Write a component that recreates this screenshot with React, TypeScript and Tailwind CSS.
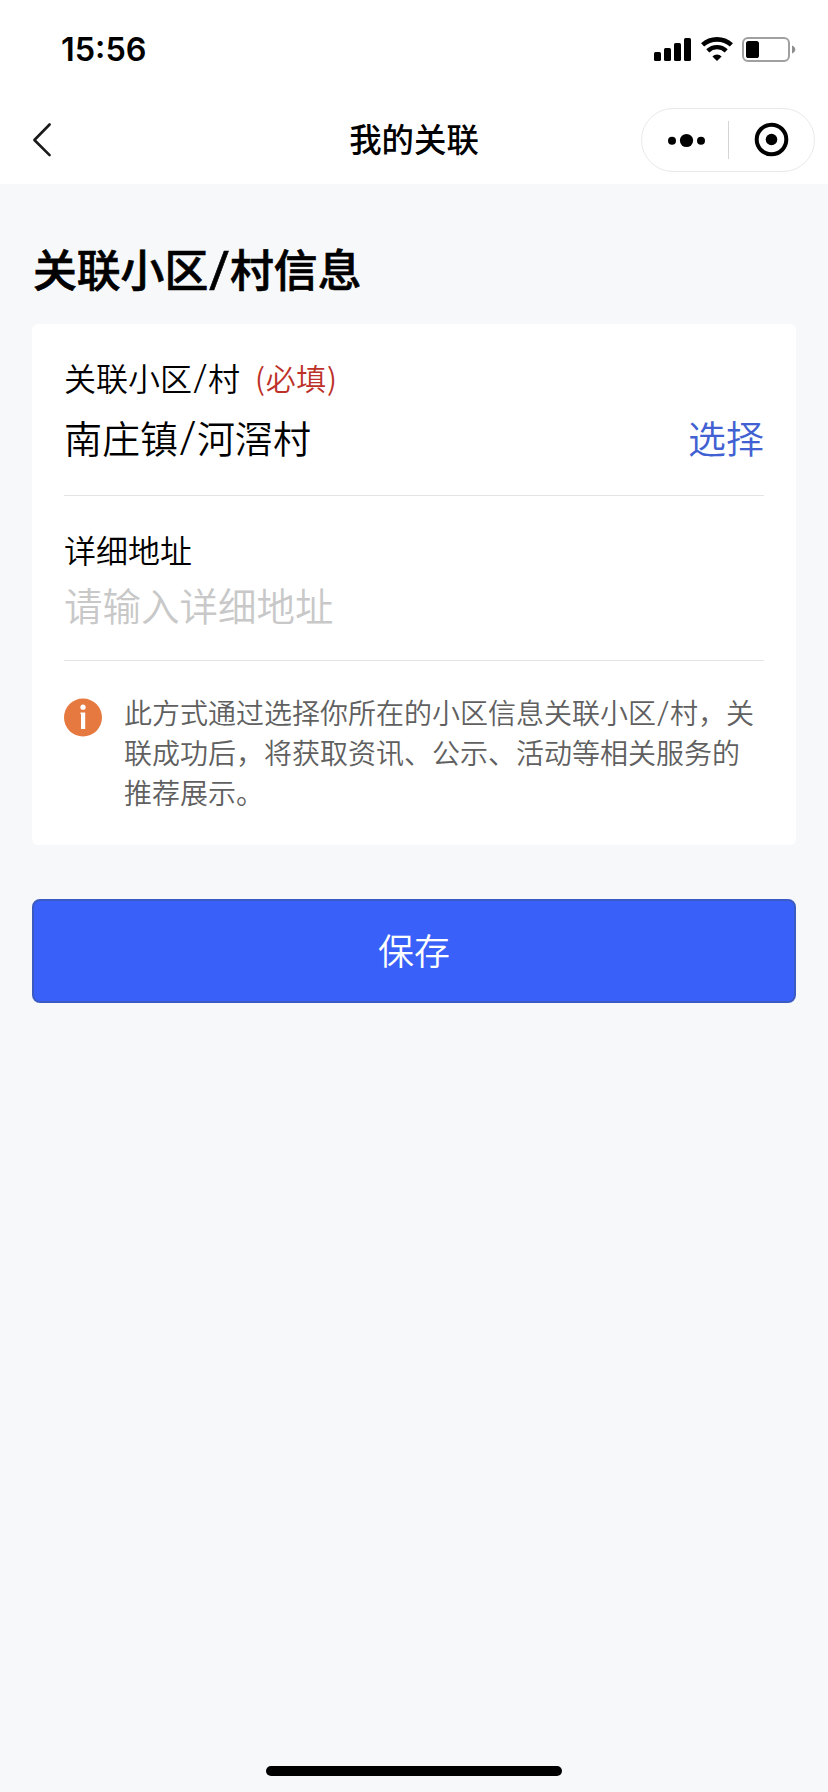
import React from "react";

function StatusBar() {
  return (
    <div className="flex h-[98px] items-start justify-between pl-[61px] pr-[32px]">
      <span className="pt-[30px] font-['Inter',sans-serif] text-[32.4px] leading-[40px] font-semibold">
        15:56
      </span>
      <div className="flex gap-[9px] pt-[36px]">
        <svg width="38" height="27" viewBox="0 0 38 27" fill="#000">
          <rect x="0" y="16" width="7" height="9" rx="1.6" />
          <rect x="10" y="12" width="7" height="13" rx="1.6" />
          <rect x="20" y="7" width="7" height="18" rx="1.6" />
          <rect x="30" y="2" width="7" height="23" rx="1.6" />
        </svg>
        <svg width="32" height="27" viewBox="0 0 32 27" fill="none" stroke="#000">
          <path d="M1.6 8.9A21.4 21.4 0 0 1 30.4 8.9" strokeWidth="4.6" />
          <path d="M6.8 14.8A13.4 13.4 0 0 1 25.2 14.8" strokeWidth="4.4" />
          <path d="M11.4 20.4A6.6 6.6 0 0 1 20.6 20.4L16 25Z" fill="#000" stroke="none" />
        </svg>
        <svg width="54" height="27" viewBox="0 0 54 27" fill="none">
          <rect x="1" y="2" width="46" height="23" rx="5" stroke="#a0a0a0" strokeWidth="2" />
          <rect x="4" y="5" width="13" height="17" rx="2.6" fill="#000" />
          <path d="M50 9.5C54.4 11 54.4 16 50 17.5Z" fill="#8e8e8e" />
        </svg>
      </div>
    </div>
  );
}

function NavBar() {
  return (
    <div className="grid h-[86px] grid-cols-[1fr_auto_1fr] items-start">
      <svg className="mt-[22px] ml-[30px]" width="24" height="40" viewBox="0 0 24 40" fill="none">
        <path d="M19.6 4.5L4.4 20L19.6 35.2" stroke="#1a1a1a" strokeWidth="2.6" strokeLinecap="round" strokeLinejoin="round" />
      </svg>
      <h1 className="pt-[18px] text-[32.4px] leading-[44px] font-medium">我的关联</h1>
      <div className="mt-[10px] mr-[13px] flex h-[64px] w-[174px] items-center justify-self-end rounded-full border border-[#e9e9e9]">
        <svg width="86" height="40" viewBox="0 0 86 40">
          <circle cx="30" cy="20.8" r="4" />
          <circle cx="44.5" cy="20.5" r="6.6" />
          <circle cx="59" cy="20.8" r="4" />
        </svg>
        <div className="h-[38px] w-px bg-[#d4d4d4]" />
        <svg width="84" height="40" viewBox="0 0 84 40">
          <circle cx="42.5" cy="19.5" r="14.8" fill="none" stroke="#000" strokeWidth="4" />
          <circle cx="42.5" cy="19.5" r="5.8" />
        </svg>
      </div>
    </div>
  );
}

function Slash() {
  return (
    <span className="inline-flex w-[0.5em] justify-center align-[-0.06em] leading-none">
      <span className="font-['Open_Sans',sans-serif] text-[1.25em] leading-[0.8]">/</span>
    </span>
  );
}

export default function App() {
  return (
    <div className="flex h-[1792px] w-[828px] flex-col bg-[#f7f8fa] font-['Noto_Sans_CJK_SC',sans-serif] font-[350] text-black">
      <header className="bg-white">
        <StatusBar />
        <NavBar />
      </header>

      <main className="flex flex-1 flex-col px-8">
        <h2 className="mt-[54px] h-[86px] pl-px text-[43.8px] leading-[60px] font-medium whitespace-nowrap [-webkit-text-stroke:0.7px_#000]">
          关联小区<Slash />村信息
        </h2>

        <section className="flex h-[521px] flex-col rounded-[6px] bg-white px-8 pt-[29px]">
          <div className="flex h-[143px] flex-col border-b border-[#e4e4e4]">
            <div className="flex h-[48px] items-center text-[32px] leading-[48px]">
              <span>关联小区<Slash />村</span>
              <span className="ml-[15px] text-[30px] tracking-[0.7px] text-[#bd3129]">(必填)</span>
            </div>
            <div className="mt-[8px] flex h-[56px] justify-between text-[38px] leading-[56px]">
              <span>南庄镇<Slash />河滘村</span>
              <span className="text-[#4161d3]">选择</span>
            </div>
          </div>

          <div className="flex h-[165px] flex-col border-b border-[#e4e4e4] pt-[29px]">
            <span className="text-[32px] leading-[48px]">详细地址</span>
            <span className="mt-[3px] text-[38.5px] leading-[56px] text-[#c8c8c8]">请输入详细地址</span>
          </div>

          <div className="flex pt-[31px]">
            <svg className="mt-[6px] shrink-0" width="38" height="40" viewBox="0 0 38 40">
              <circle cx="19" cy="19.5" r="19" fill="#e67940" />
              <circle cx="19" cy="9.2" r="2.6" fill="#fff" />
              <path d="M16.4 14.4H21.2V31H17V16H16.4Z" fill="#fff" />
            </svg>
            <p className="ml-[22px] text-[28px] leading-[40px] whitespace-nowrap text-[#606060]">
              此方式通过选择你所在的小区信息关联小区<Slash />村，关
              <br />
              联成功后，将获取资讯、公示、活动等相关服务的
              <br />
              推荐展示。
            </p>
          </div>
        </section>

        <button className="mt-[54px] h-[104px] rounded-[8px] border-2 border-[#3b5bc4] bg-[#3960f8] pb-[4px] text-[36px] leading-[52px] text-white">
          保存
        </button>
      </main>

      <footer className="flex h-[26px] justify-center">
        <div className="h-[10px] w-[296px] rounded-full bg-black" />
      </footer>
    </div>
  );
}
